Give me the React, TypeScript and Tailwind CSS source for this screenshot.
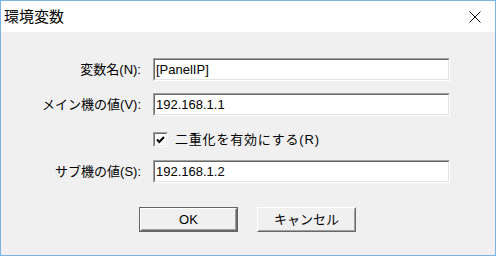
import React from "react";

const font = { fontFamily: "'Liberation Sans', 'Noto Sans CJK JP', sans-serif" };

function Field({ value }: { value: string }) {
  return (
    <div className="h-[23px] w-[297px] border border-t-[#a0a0a0] border-l-[#a0a0a0] border-b-white border-r-white">
      <div className="flex h-full w-full items-center border border-t-[#696969] border-l-[#696969] border-b-[#e3e3e3] border-r-[#e3e3e3] bg-white pl-[1px] text-[13px] text-black">
        {value}
      </div>
    </div>
  );
}

function Label({ text }: { text: string }) {
  return <div className="flex h-[23px] items-center justify-end text-[13px] text-black">{text}</div>;
}

function Button({ text, isDefault }: { text: string; isDefault?: boolean }) {
  const face = (
    <div className="h-full w-full border border-t-white border-l-white border-b-[#696969] border-r-[#696969]">
      <div className="flex h-full w-full items-center justify-center border border-t-[#f0f0f0] border-l-[#f0f0f0] border-b-[#a0a0a0] border-r-[#a0a0a0] bg-[#f0f0f0] text-[13px] text-black">
        {text}
      </div>
    </div>
  );
  if (isDefault) {
    return <div className="h-[25px] w-[99px] border border-[#646464]">{face}</div>;
  }
  return <div className="h-[25px] w-[99px]">{face}</div>;
}

export default function App() {
  return (
    <div className="flex h-[256px] w-[496px] flex-col border border-[#7cb2ea]" style={font}>
      {/* title bar */}
      <div className="flex h-[31px] items-center justify-between bg-white pl-[3px] pr-[14px]">
        <span className="text-[15px] text-black" style={{ fontFamily: "'Noto Sans CJK JP', sans-serif" }}>
          環境変数
        </span>
        <svg width="12" height="12" viewBox="0 0 12 12">
          <path d="M0.5 0.5 L11.5 11.5 M11.5 0.5 L0.5 11.5" stroke="#111" strokeWidth="1" />
        </svg>
      </div>

      {/* body */}
      <div className="flex-1 bg-[#f0f0f0] pt-[26px]">
        <div className="grid grid-cols-[140px_297px] gap-x-[12px]">
          <Label text="変数名(N):" />
          <Field value="[PanelIP]" />

          <div className="col-span-2 h-[12px]" />
          <Label text="メイン機の値(V):" />
          <Field value="192.168.1.1" />

          <div className="col-span-2 h-[12px]" />
          <div />
          <div className="flex h-[23px] items-center gap-[7px]">
            <div className="h-[15px] w-[15px] border border-t-[#a0a0a0] border-l-[#a0a0a0] border-b-white border-r-white">
              <div className="flex h-full w-full items-center justify-center border border-t-[#696969] border-l-[#696969] border-b-[#e3e3e3] border-r-[#e3e3e3] bg-white">
                <svg width="9" height="8" viewBox="0 0 9 8">
                  <path d="M1 3.5 L3.3 6 L8 1" stroke="#000" strokeWidth="2" fill="none" />
                </svg>
              </div>
            </div>
            <span className="text-[13px] tracking-[0.8px] text-black">二重化を有効にする(R)</span>
          </div>

          <div className="col-span-2 h-[9px]" />
          <Label text="サブ機の値(S):" />
          <Field value="192.168.1.2" />
        </div>

        <div className="mt-[24px] flex gap-[19px] pl-[138px]">
          <Button text="OK" isDefault />
          <Button text="キャンセル" />
        </div>
      </div>
    </div>
  );
}
